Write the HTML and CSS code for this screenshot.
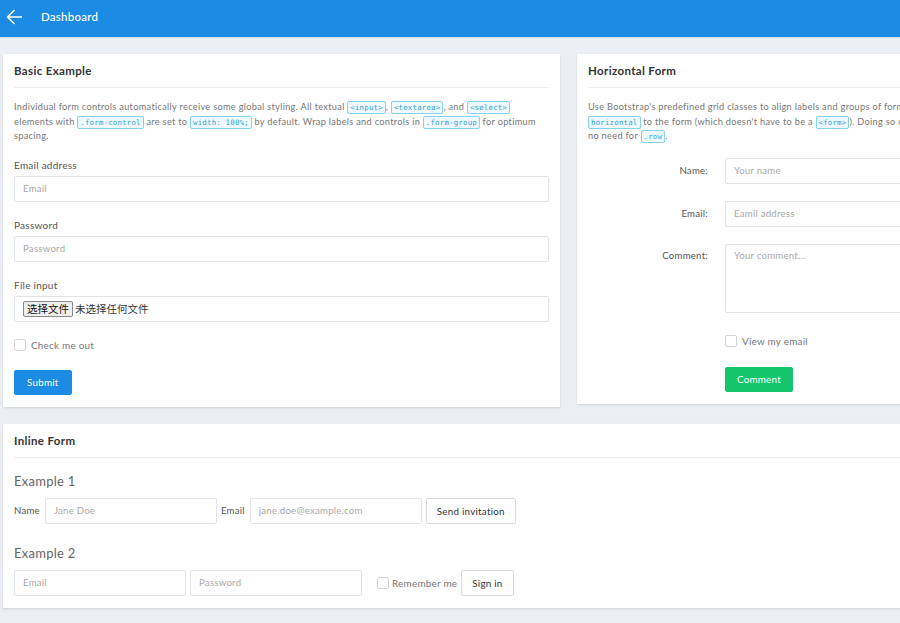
FILE: index.html
```html
<!DOCTYPE html>
<html lang="en">
<head>
<meta charset="utf-8">
<title>Dashboard</title>
<link rel="stylesheet" href="styles.css">
</head>
<body>
<header class="topbar">
  <a class="back" href="#">
    <svg width="16" height="16" viewBox="0 0 16 16" aria-hidden="true"><path d="M15.5 8H1.5M8 1.5L1.5 8 8 14.5" fill="none" stroke="#fff" stroke-width="1.6" stroke-linecap="round" stroke-linejoin="round"/></svg>
  </a>
  <span class="topbar-title">Dashboard</span>
</header>

<main class="content">
  <div class="cols">
    <section class="card">
      <h3 class="card-head">Basic Example</h3>
      <div class="card-body">
        <p class="desc">Individual form controls automatically receive some global styling. All textual <code>&lt;input&gt;</code>, <code>&lt;textarea&gt;</code>, and <code>&lt;select&gt;</code> elements with <code>.form-control</code> are set to <code>width: 100%;</code> by default. Wrap labels and controls in <code>.form-group</code> for optimum spacing.</p>
        <div class="group">
          <label class="label">Email address</label>
          <input class="control" type="text" placeholder="Email">
        </div>
        <div class="group">
          <label class="label">Password</label>
          <input class="control" type="text" placeholder="Password">
        </div>
        <div class="group">
          <label class="label">File input</label>
          <div class="control file">
            <span class="file-btn">选择文件</span>
            <span class="file-name">未选择任何文件</span>
          </div>
        </div>
        <label class="check"><input type="checkbox" class="box"> Check me out</label>
        <button class="btn btn-blue" type="button">Submit</button>
      </div>
    </section>

    <section class="card">
      <h3 class="card-head">Horizontal Form</h3>
      <div class="card-body">
        <p class="desc">Use Bootstrap's predefined grid classes to align labels and groups of form controls in a horizontal layout by adding <code>.form-horizontal</code> to the form (which doesn't have to be a <code>&lt;form&gt;</code>). Doing so changes <code>.form-group</code>s to behave as grid rows, so no need for <code>.row</code>.</p>
        <div class="hrow">
          <label class="hlabel">Name:</label>
          <input class="control" type="text" placeholder="Your name">
        </div>
        <div class="hrow">
          <label class="hlabel">Email:</label>
          <input class="control" type="text" placeholder="Eamil address">
        </div>
        <div class="hrow top">
          <label class="hlabel">Comment:</label>
          <textarea class="control area" placeholder="Your comment..."></textarea>
        </div>
        <div class="hrow plain">
          <span class="hlabel"></span>
          <label class="check"><input type="checkbox" class="box"> View my email</label>
        </div>
        <div class="hrow plain">
          <span class="hlabel"></span>
          <button class="btn btn-green" type="button">Comment</button>
        </div>
      </div>
    </section>
  </div>

  <section class="card">
    <h3 class="card-head">Inline Form</h3>
    <div class="card-body">
      <h4 class="example">Example 1</h4>
      <div class="inline">
        <label class="ilabel">Name</label>
        <input class="control short" type="text" placeholder="Jane Doe">
        <label class="ilabel">Email</label>
        <input class="control short" type="text" placeholder="jane.doe@example.com">
        <button class="btn btn-default" type="button">Send invitation</button>
      </div>
      <h4 class="example second">Example 2</h4>
      <div class="inline">
        <input class="control short" type="text" placeholder="Email">
        <input class="control short" type="text" placeholder="Password">
        <label class="check remember"><input type="checkbox" class="box">Remember me</label>
        <button class="btn btn-default" type="button">Sign in</button>
      </div>
    </div>
  </section>
</main>
</body>
</html>
```

FILE: styles.css
```css
* {
  box-sizing: border-box;
}

html, body {
  margin: 0;
  overflow: hidden;
}

body {
  background: #eceff3;
  font-family: "Lato", "Open Sans", sans-serif;
  letter-spacing: 0.25px;
  color: #555;
  width: 1140px;
}

/* top bar */
.topbar {
  height: 37px;
  background: #1b8be3;
  display: flex;
  align-items: center;
  padding: 0 0 4px 6px;
  box-shadow: 0 1px 1px rgba(0, 0, 0, 0.08);
}

.back {
  display: flex;
  width: 16px;
  height: 16px;
}

.topbar-title {
  margin-left: 19px;
  color: #fff;
  font-size: 11.5px;
  font-weight: 500;
}

/* page area */
.content {
  padding: 17px 3px;
  display: flex;
  flex-direction: column;
  gap: 17px;
}

.cols {
  display: grid;
  grid-template-columns: 557px 557px;
  gap: 17px;
  align-items: start;
}

.card {
  background: #fff;
  box-shadow: 0 1px 2px rgba(0, 0, 0, 0.12);
}

.card-head {
  margin: 0 11px;
  height: 34px;
  display: flex;
  align-items: center;
  border-bottom: 1px solid #eef0f2;
  font-size: 11.5px;
  font-weight: 700;
  letter-spacing: 0.35px;
  color: #333;
}

.card-body {
  padding: 12px 11px 12px;
}

.desc {
  margin: 0 0 14px;
  font-size: 9.2px;
  letter-spacing: 0.31px;
  line-height: 14.5px;
  color: #777;
}

code {
  font-family: "DejaVu Sans Mono", monospace;
  font-size: 7.4px;
  letter-spacing: 0.2px;
  line-height: 1;
  color: #2fa6d9;
  background: #eff9fd;
  border: 1px solid #83d2ef;
  border-radius: 2px;
  padding: 1px 2px;
  -webkit-box-decoration-break: clone;
  box-decoration-break: clone;
}

/* basic form */
.group {
  margin-bottom: 16px;
}

.label {
  display: block;
  font-size: 10px;
  line-height: 14px;
  color: #555;
  margin-bottom: 4px;
}

.control {
  display: block;
  width: 100%;
  height: 26px;
  border: 1px solid #e1e3e6;
  border-radius: 2px;
  padding: 0 8px;
  font-family: inherit;
  letter-spacing: inherit;
  font-size: 9.6px;
  color: #555;
  background: #fff;
  outline: none;
}

.control::placeholder {
  color: #a9a9a9;
}

.file {
  display: flex;
  align-items: center;
  gap: 2px;
  letter-spacing: 0;
}

.file-btn {
  font-family: "Noto Sans CJK SC", sans-serif;
  font-size: 10.5px;
  line-height: 14px;
  color: #111;
  background: #efefef;
  border: 1px solid #8a8a8a;
  border-radius: 2px;
  padding: 0 3px;
  height: 16px;
  display: flex;
  align-items: center;
}

.file-name {
  font-family: "Noto Sans CJK SC", sans-serif;
  font-size: 10.5px;
  color: #333;
}

.check {
  display: flex;
  align-items: center;
  gap: 5px;
  font-size: 9.9px;
  color: #777;
  height: 14px;
}

.box {
  -webkit-appearance: none;
  appearance: none;
  margin: 0;
  width: 12px;
  height: 12px;
  border: 1px solid #d3d3d3;
  border-radius: 2px;
  background: #fff;
}

.card-body > .check {
  margin: 0 0 18px;
}

.btn {
  height: 25px;
  border-radius: 2px;
  font-family: inherit;
  letter-spacing: inherit;
  font-size: 9.8px;
  padding: 0 12px;
  cursor: pointer;
}

.btn-blue {
  background: #1b8be3;
  border: 1px solid #1b8be3;
  color: #fff;
}

.btn-green {
  background: #14c56c;
  border: 1px solid #14c56c;
  color: #fff;
  padding: 0 11px;
}

.btn-default {
  background: #fff;
  border: 1px solid #dcdcdc;
  color: #333;
  height: 26px;
  padding: 0 10px;
}

/* horizontal form */
.hrow {
  display: flex;
  align-items: center;
  gap: 17px;
  margin-bottom: 17px;
}

.hrow.top {
  align-items: flex-start;
  margin-bottom: 21px;
}

.hrow.plain {
  margin-bottom: 0;
}

.hrow.plain + .hrow.plain {
  margin-top: 19px;
}

.hlabel {
  flex: 0 0 120px;
  text-align: right;
  font-size: 9.6px;
  color: #555;
}

.hrow.top .hlabel {
  padding-top: 6px;
}

.hrow .control {
  flex: 1;
}

.area {
  height: 69px;
  padding: 5px 8px;
  resize: none;
}

/* inline form */
.example {
  margin: 3px 0 9px;
  font-size: 13px;
  line-height: 16px;
  font-weight: 400;
  color: #666;
}

.example.second {
  margin-top: 21px;
}

.inline {
  display: flex;
  align-items: center;
  gap: 4px;
}

.ilabel {
  font-size: 9.6px;
  color: #555;
  margin-right: 1px;
}

.short {
  width: 172px;
  flex: 0 0 172px;
}

.remember {
  margin-left: 11px;
  gap: 3px;
}
```
